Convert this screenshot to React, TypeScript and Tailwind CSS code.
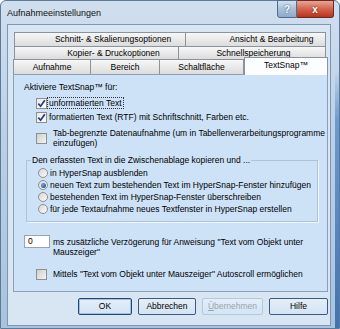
import React from "react";

const Check = ({ checked }: { checked?: boolean }) => (
	<span
		className={
			"w-[11px] h-[11px] shrink-0 border border-[#8e8f8f] flex items-center justify-center " +
			(checked
				? "bg-[linear-gradient(135deg,#e9e9e9,#ffffff)]"
				: "bg-[linear-gradient(135deg,#cfcfcf,#f4f4f4)]")
		}
	>
		{checked && (
			<svg width="9" height="9" viewBox="0 0 9 9">
				<path d="M1.3 4.6 L3.6 7.2 L7.8 1.2" stroke="#1f3f7d" strokeWidth="1.7" fill="none" />
			</svg>
		)}
	</span>
);

const Radio = ({ checked }: { checked?: boolean }) => (
	<span className="w-[10px] h-[10px] shrink-0 rounded-full border border-[#8c8f93] bg-[linear-gradient(135deg,#d6d6d6,#fbfbfb)] flex items-center justify-center">
		{checked && <span className="w-[5px] h-[5px] rounded-full bg-[radial-gradient(circle_at_35%_35%,#6fa6e0,#123f80)]" />}
	</span>
);

const Tab = ({ label, w, pl, first }: { label: string; w: string; pl?: string; first?: boolean }) => (
	<div
		className={
			"h-full flex items-center justify-center border-t border-r border-[#8b939c] bg-[linear-gradient(to_bottom,#f7f7f7,#dcdcdc)] " +
			w +
			" " +
			(pl || "") +
			(first ? " border-l" : "")
		}
	>
		{label}
	</div>
);

const Btn = ({ label, w, disabled, def }: { label: React.ReactNode; w: string; disabled?: boolean; def?: boolean }) => (
	<div
		className={
			"h-[17px] flex items-center justify-center rounded-[2px] border bg-[linear-gradient(to_bottom,#e4eef8,#d3e4f5)] " +
			w +
			(disabled
				? " border-[#b3c9df] text-[#9aa4ae]"
				: def
					? " border-[#27466c] shadow-[inset_0_0_0_1px_#9fc0e4]"
					: " border-[#3b5a80]")
		}
	>
		{label}
	</div>
);

export default function App() {
	return (
		<div className="w-[340px] h-[329px] overflow-hidden font-['Liberation_Sans',Arial,sans-serif] text-[8.5px] text-black">
			<div className="w-full h-full flex flex-col pl-[6px] pr-[8px] pb-[2px] rounded-t-[6px] border border-[#5d7a9a] bg-[linear-gradient(to_bottom,transparent_70px,#6d9bd0_120px,#3f74b2),linear-gradient(to_bottom,#d0dfee,#bcd0e6_40%,#a9c3de)] bg-[length:4px_100%,100%_100%] bg-[position:right_top,left_top] bg-no-repeat">
				{/* title bar */}
				<div className="h-[23px] flex items-start shrink-0">
					<span className="mt-[6px] ml-[0px] leading-[12px] text-[9px] text-[#111]">Aufnahmeeinstellungen</span>
					<div className="ml-auto -mr-[3px] -mt-[1px] flex">
						<div className="w-[20px] h-[18px] rounded-bl-[3px] border border-[#4f6c8c] bg-[linear-gradient(to_bottom,#d3e1ef,#a8c0da_50%,#8eaacb)] flex items-center justify-center text-[10px] font-bold text-white [text-shadow:0_0_2px_#2c4a6e]">
							?
						</div>
						<div className="w-[37px] h-[18px] rounded-br-[3px] border border-l-0 border-[#6b2a22] bg-[linear-gradient(to_bottom,#e9a595,#d4634d_50%,#b9331f)] flex items-center justify-center text-[10px] font-bold text-white [text-shadow:0_0_2px_#5a1a10]">
							x
						</div>
					</div>
				</div>

				{/* client area */}
				<div className="flex-1 border border-[#7d96b2] bg-[#d8e6f4] flex flex-col pl-[5px] pt-[7px]">
					<div className="w-[315px] flex flex-col">
						<div className="flex h-[14px] ml-[1px]">
							<Tab first label="Schnitt- & Skalierungsoptionen" w="w-[172px]" pl="pl-[26px]" />
							<Tab label="Ansicht & Bearbeitung" w="w-[140px]" pl="pl-[32px]" />
						</div>
						<div className="flex h-[13px] ml-[1px]">
							<Tab first label="Kopier- & Druckoptionen" w="w-[165px]" pl="pl-[34px]" />
							<Tab label="Schnellspeicherung" w="w-[147px]" pl="pl-[3px]" />
						</div>
						<div className="flex h-[15px] items-end">
							<Tab first label="Aufnahme" w="w-[78px]" />
							<Tab label="Bereich" w="w-[69px]" />
							<Tab label="Schaltfläche" w="w-[84px]" />
							<div className="relative z-10 w-[84px] h-[18px] -mb-[1px] border border-b-0 border-[#8b939c] bg-[#fbfdff] flex items-center justify-center pb-[3px]">
								TextSnap™
							</div>
						</div>

						{/* panel */}
						<div className="h-[218px] border border-[#8ba0b8] bg-[#cde2f7] flex flex-col pt-[7px]">
							<div className="ml-[10px] leading-[11px]">Aktiviere TextSnap™ für:</div>
							<div className="flex items-center h-[12px] mt-[4px] ml-[22px] gap-[1px]">
								<Check checked />
								<span className="px-[1px] leading-[10px] outline outline-1 outline-dotted outline-[#333]">unformatierten Text</span>
							</div>
							<div className="flex items-center h-[12px] mt-[2px] ml-[22px] gap-[2px]">
								<Check checked />
								<span className="leading-[11px]">formatierten Text (RTF) mit Schriftschnitt, Farben etc.</span>
							</div>
							<div className="flex items-center mt-[5px] ml-[22px] gap-[6px]">
								<Check />
								<div className="leading-[10px]">
									<div>Tab-begrenzte Datenaufnahme (um in Tabellenverarbeitungsprogramme</div>
									<div>einzufügen)</div>
								</div>
							</div>

							<fieldset className="mt-[7px] ml-[12px] w-[292px] border border-[#aec3d9] pt-[1px] pb-[6px] shadow-[1px_1px_0_#eef5fc]">
								<legend className="ml-[4px] px-[1px] leading-[11px]">Den erfassten Text in die Zwischenablage kopieren und ...</legend>
								{[
									["in HyperSnap ausblenden", false],
									["neuen Text zum bestehenden Text im HyperSnap-Fenster hinzufügen", true],
									["bestehenden Text im HyperSnap-Fenster überschreiben", false],
									["für jede Textaufnahme neues Textfenster in HyperSnap erstellen", false],
								].map(([t, c]) => (
									<div key={t as string} className="flex items-center h-[12px] ml-[11px] gap-[2px]">
										<Radio checked={c as boolean} />
										<span className="leading-[11px]">{t}</span>
									</div>
								))}
							</fieldset>

							<div className="flex mt-[13px] ml-[10px] gap-[3px]">
								<div className="w-[26px] h-[13px] shrink-0 border border-[#9aa3ae] bg-white pl-[3px] leading-[11px]">0</div>
								<div className="leading-[10px] mt-[2px]">
									<div>ms zusätzliche Verzögerung für Anweisung "Text vom Objekt unter</div>
									<div>Mauszeiger"</div>
								</div>
							</div>

							<div className="flex items-center h-[11px] mt-[12px] ml-[22px] gap-[6px]">
								<Check />
								<span className="leading-[11px]">Mittels "Text vom Objekt unter Mauszeiger" Autoscroll ermöglichen</span>
							</div>
						</div>
					</div>

					{/* buttons */}
					<div className="flex justify-end gap-[6px] mt-[6px] pr-[2px]">
						<Btn def label="OK" w="w-[54px]" />
						<Btn label="Abbrechen" w="w-[58px]" />
						<Btn
							disabled
							label={
								<span>
									<span className="underline">Ü</span>bernehmen
								</span>
							}
							w="w-[61px]"
						/>
						<Btn label="Hilfe" w="w-[59px]" />
					</div>
				</div>
			</div>
		</div>
	);
}
